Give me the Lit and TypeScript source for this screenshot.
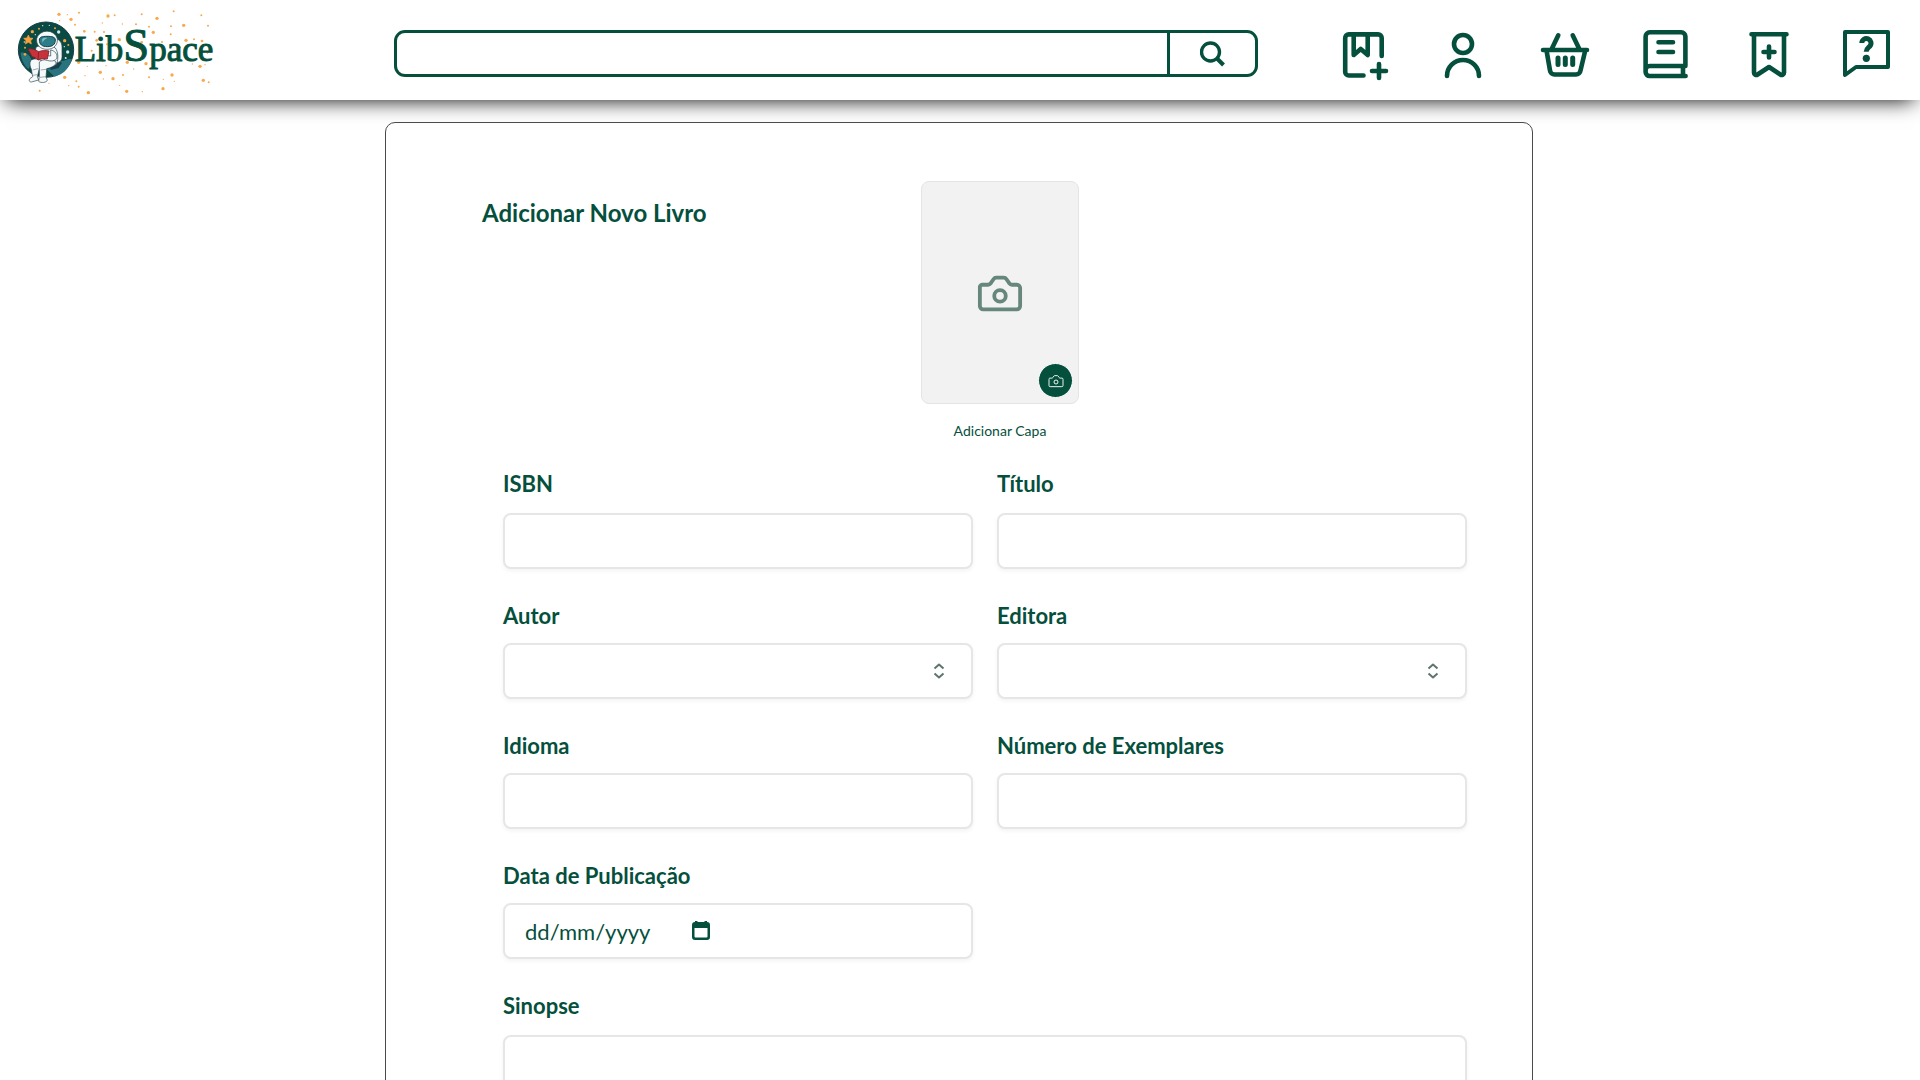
import { LitElement, html, css, svg } from "lit";
import { customElement } from "lit/decorators.js";

type Field = {
  id: string;
  label: string;
  kind: "text" | "select" | "number" | "date";
};

const FIELDS: Field[] = [
  { id: "isbn", label: "ISBN", kind: "text" },
  { id: "titulo", label: "Título", kind: "text" },
  { id: "autor", label: "Autor", kind: "select" },
  { id: "editora", label: "Editora", kind: "select" },
  { id: "idioma", label: "Idioma", kind: "text" },
  { id: "exemplares", label: "Número de Exemplares", kind: "number" },
  { id: "publicacao", label: "Data de Publicação", kind: "date" },
];

const NAV = [
  {
    label: "Adicionar livro",
    art: svg`<path d="M39.700 26V8a3.600 3.600 0 0 0-3.600-3.600H6.800A3.600 3.600 0 0 0 3.200 8v33.900a3.600 3.600 0 0 0 3.600 3.600H21.500"/>
      <path d="M11.700 5v20l7-6 7 6V5"/><path d="M37 34v14M30 41h14"/>`,
  },
  {
    label: "Perfil",
    art: svg`<circle cx="21" cy="14" r="9"/><path d="M5 46a16 16 0 0 1 32 0"/>`,
  },
  {
    label: "Cesta",
    art: svg`<path d="M1 20h44M4.700 21.500 8 40.500a4.500 4.500 0 0 0 4.500 4H34a4.500 4.500 0 0 0 4.500-4L43 21.500M16.300 5.300 9.700 19M30.700 5.300 37.300 19"/>
      <path d="M16 28v6.500M23.300 28v6.500M30.700 28v6.500" stroke-width="5"/>`,
  },
  {
    label: "Empréstimos",
    art: svg`<path d="M43.400 36V6.500a4.200 4.200 0 0 0-4.200-4.200H7.800a4.200 4.200 0 0 0-4.200 4.200V42a4 4 0 0 0 4 4h36M3.600 40a4 4 0 0 1 4-4h35.800M41 36v10"/>
      <path d="M16.500 12.300h14.500M16.500 22h14.500"/>`,
  },
  {
    label: "Lista de desejos",
    art: svg`<path d="M9.500 4.300h35M12 5v37.500a2.300 2.300 0 0 0 3.600 2L27 37l11.400 7.500a2.300 2.300 0 0 0 3.600-2V5"/>
      <path d="M27 16.500v11M21.500 22h11"/>`,
  },
  {
    label: "Ajuda",
    art: svg`<path d="M3 45V2h43v35H14z" stroke-width="4"/>
      <path d="M19.800 13a4.600 4.600 0 1 1 8 3.200c-1.800 1.700-3.600 2.600-3.600 5.500" stroke-width="5" stroke-linecap="butt"/>
      <circle cx="24.300" cy="28.300" r="3.600" fill="currentColor" stroke="none"/>`,
  },
];

/* Star field around the wordmark: x, y, radius. */
const STARS: [number, number, number][] = [
  [177, 43, 5], [202, 44, 2], [237, 38, 3], [213, 58, 5], [179, 62, 2], [225, 74, 3], [324, 48, 5], [344, 46, 3],
  [307, 69, 2], [425, 43, 3], [471, 55, 5], [521, 34, 3], [513, 79, 3], [551, 76, 5], [604, 46, 3], [624, 77, 3],
  [367, 72, 2], [408, 73, 3], [447, 80, 3], [460, 97, 5], [253, 94, 4], [284, 95, 3], [312, 96, 3], [290, 121, 4],
  [358, 119, 5], [392, 122, 5], [431, 112, 3], [425, 127, 4], [512, 103, 3], [558, 121, 5], [582, 118, 3], [606, 123, 4],
  [321, 133, 3], [428, 154, 4], [486, 126, 3], [540, 142, 3], [236, 187, 5], [262, 199, 2], [308, 182, 4], [318, 197, 2],
  [301, 217, 5], [255, 227, 2], [339, 236, 5], [310, 237, 2], [382, 187, 5], [401, 207, 2], [369, 225, 3], [438, 191, 5],
  [380, 274, 5], [359, 256, 2], [427, 275, 2], [447, 232, 3], [489, 266, 5], [490, 238, 2], [516, 225, 5], [523, 244, 2],
  [535, 181, 3], [577, 192, 2], [600, 199, 5], [615, 194, 2], [610, 241, 5], [626, 247, 3], [265, 278, 5], [236, 260, 3],
  [229, 244, 3], [194, 232, 5], [206, 257, 2], [119, 272, 3], [147, 250, 2], [191, 214, 3], [275, 152, 3], [622, 160, 2],
];

@customElement("app-root")
class AppRoot extends LitElement {
  static styles = css`
    :host {
      --green: #054f3d;
      display: block;
      height: 100vh;
      overflow-y: auto;
      scrollbar-width: none;
      background: #fff;
      color: var(--green);
      font-family: Lato, "Noto Sans", sans-serif;
    }
    *, *::before, *::after {
      box-sizing: border-box;
    }
    button, input, select, textarea {
      margin: 0;
      color: inherit;
      font: inherit;
    }
    button {
      padding: 0;
      border: 0;
      background: none;
      cursor: pointer;
    }
    svg {
      display: block;
    }
    .topbar {
      display: grid;
      grid-template-columns: 378fr 864fr 84fr 548fr;
      align-items: center;
      height: 100px;
      padding: 0 30px 0 16px;
      background: #fff;
      box-shadow: 0 6px 20px -6px #000;
    }
    .logo {
      width: 200px;
      color: inherit;
      padding-top: 4px;
    }
    .logo svg {
      width: 200px;
      height: 88px;
    }
    .wordmark {
      font-family: "Liberation Serif", serif;
      font-size: 105px;
      stroke: currentColor;
      stroke-width: 3;
    }
    .wordmark .tall {
      font-size: 140px;
    }
    .search {
      display: flex;
      height: 47px;
      margin-top: 7px;
      border: 3px solid var(--green);
      border-radius: 11px;
    }
    .search input {
      flex: 1;
      min-width: 0;
      padding: 0 14px;
      border: 0;
      border-radius: 8px;
      background: none;
      font-size: 22px;
      outline: none;
    }
    .search button {
      display: grid;
      place-items: center;
      width: 88px;
      border-left: 3px solid var(--green);
    }
    .search svg {
      width: 26px;
      height: 26px;
    }
    .nav {
      display: flex;
      grid-column: 4;
      justify-content: space-between;
      margin-top: 8px;
    }
    .nav a {
      color: inherit;
    }
    .nav svg {
      width: 48px;
      height: 48px;
      overflow: visible;
      fill: none;
      stroke: currentColor;
      stroke-width: 4.6;
      stroke-linecap: round;
      stroke-linejoin: round;
    }
    .main {
      padding: 22px 24px 40px 22px;
    }
    .card {
      max-width: 1148px;
      margin: 0 auto;
      padding: 58px 65px 60px 96px;
      border: 1px solid #4a4a4a;
      border-radius: 10px;
    }
    .intro {
      display: grid;
      grid-template-columns: 439fr 158px 388fr;
      align-items: start;
    }
    h1 {
      margin: 0;
      padding-top: 16px;
      font-size: 24px;
      line-height: 32px;
      font-weight: 700;
    }
    .cover {
      display: grid;
      gap: 17px;
      justify-items: center;
      font-size: 14px;
      line-height: 20px;
    }
    .cover-box {
      position: relative;
      display: grid;
      place-items: center;
      width: 158px;
      height: 223px;
      border: 1px solid #e4e4e4;
      border-radius: 8px;
      background: #f2f2f2;
    }
    .cover-art {
      width: 46px;
      height: 46px;
      color: #67877d;
    }
    .badge {
      position: absolute;
      right: 5px;
      bottom: 5px;
      display: grid;
      place-items: center;
      width: 35px;
      height: 35px;
      border: 1px solid #fff;
      border-radius: 50%;
      background: var(--green);
      color: #fff;
    }
    .badge svg {
      width: 16px;
      height: 16px;
    }
    .fields {
      display: grid;
      grid-template-columns: 1fr 1fr;
      gap: 35px 24px;
      padding: 31px 0 0 21px;
    }
    .field {
      display: flex;
      flex-direction: column;
      gap: 15px;
    }
    .field.roomy {
      gap: 17px;
    }
    .field.wide {
      grid-column: 1 / -1;
    }
    .field label {
      font-size: 22px;
      line-height: 24px;
      font-weight: 700;
    }
    .control {
      display: flex;
      align-items: center;
      height: 56px;
      border: 2px solid #e6e6e6;
      border-radius: 8px;
      background: #fff;
      box-shadow: 0 2px 4px rgba(0, 0, 0, 0.05);
    }
    .control.area {
      height: 160px;
    }
    .control input, .control select, .control textarea {
      grid-area: 1 / 1;
      width: 100%;
      height: 100%;
      padding: 0 20px;
      border: 0;
      border-radius: 6px;
      background: none;
      font-size: 22px;
      outline: none;
      appearance: none;
      resize: none;
    }
    .control.pick {
      display: grid;
      align-items: center;
    }
    .control.pick svg {
      grid-area: 1 / 1;
      justify-self: end;
      width: 12px;
      height: 18px;
      margin-right: 26px;
      pointer-events: none;
      color: #5f756e;
    }
    .control.date {
      gap: 10px;
      padding-left: 20px;
    }
    .control.date input {
      width: 156px;
      padding: 0;
    }
    .control.date svg {
      width: 20px;
      height: 20px;
    }
    input::placeholder {
      color: var(--green);
      opacity: 1;
    }
  `;

  private camera(width: number) {
    return svg`<path d="M3.500 8.200h3.300a1.600 1.600 0 0 0 1.300-.700l1.600-2.300a1.600 1.600 0 0 1 1.300-.700h4a1.600 1.600 0 0 1 1.300.700l1.600 2.300a1.600 1.600 0 0 0 1.300.700h2.600A1.700 1.700 0 0 1 23.500 10v9.300A1.700 1.700 0 0 1 21.800 21H4.200a1.700 1.700 0 0 1-1.700-1.700V10a1.700 1.700 0 0 1 1-1.800z"
      transform="translate(-1 -0.500)" fill="none" stroke="currentColor" stroke-width=${width} stroke-linejoin="round"/>
      <circle cx="12" cy="13.500" r="3" fill="none" stroke="currentColor" stroke-width=${width}/>`;
  }

  private logo() {
    return html`<svg viewBox="48 24 600 264" role="img" aria-label="LibSpace">
      <g fill="#f9a84d">${STARS.map(([x, y, r]) => svg`<circle cx=${x} cy=${y} r=${r}></circle>`)}</g>
      <circle cx="138" cy="149" r="83" fill="#0b4a43" stroke="#173f4a" stroke-width="3"/>
      <path d="M62 158c14-4 30 8 34 26l-10 24c-14-12-22-28-24-50zM140 208c20-2 24-20 44-24 14-3 20-10 32-6-8 26-26 46-52 52z" fill="#2a7480"/>
      <path d="M150 196l22-14 14 6-10 16-24 6z" fill="#173f4a"/>
      <path d="M85 105l4 9 10 1-7 7 2 10-9-5-9 5 2-10-7-7 10-1z" fill="#f9a13c" stroke="#f9a13c" stroke-width="2"/>
      <g fill="#f9a13c"><circle cx="97" cy="95" r="5"/><circle cx="117" cy="86" r="3"/><circle cx="75" cy="143" r="3"/><circle cx="75" cy="163" r="4"/><circle cx="194" cy="122" r="5"/><circle cx="165" cy="85" r="3"/><circle cx="205" cy="135" r="3"/></g>
      <g fill="#cfeaf0"><circle cx="176" cy="96" r="5"/><circle cx="128" cy="77" r="2"/><circle cx="148" cy="76" r="2"/><circle cx="203" cy="156" r="5"/><circle cx="193" cy="140" r="2"/><circle cx="106" cy="104" r="2"/><circle cx="197" cy="174" r="3"/><circle cx="73" cy="126" r="2"/></g>
      <g fill="#f6f9fa" stroke="#24424d" stroke-width="2" stroke-linejoin="round">
        <path d="M162 118c14-4 24 8 24 24v28c0 12-8 18-18 18l-12-30z"/>
        <path d="M108 142c10-8 46-8 58 2 8 10 10 30 4 48-18 14-46 14-64 2 0-18-2-36 2-52z"/>
        <path d="M92 182c6-8 28-6 34 2l-8 22-6 24 4 10-22 6c-8 0-8-8-2-12l6-4-4-22c-4-8-6-18-2-26z"/>
        <path d="M118 186c8-10 42-10 50 0 2 12-20 18-28 20l-2 26 4 8c0 8-20 10-26 4l2-18z"/>
        <path d="M152 150c12 2 22 12 18 26-8 10-24 8-38 2l2-12 18 2z"/>
        <path d="M110 116a32 30 0 0 1 62 0c2 18-10 32-31 32s-33-14-31-32z"/>
      </g>
      <path d="M118 120c0-9 8-11 23-11s25 2 25 11c0 13-8 20-24 20s-24-7-24-20z" fill="#2d7d88" stroke="#173f4a" stroke-width="3"/>
      <path d="M126 118c4-5 12-5 16-4-8 4-12 8-14 14z" fill="#79bcc4"/>
      <path d="M84 147c12-2 22 2 32 8 10-4 20-4 31-2l-5 24c-10-2-18-1-27 3-8-6-12-9-19-10z" fill="#c8323a" stroke="#7a1f2b" stroke-width="2.500" stroke-linejoin="round"/>
      <path d="M116 155l-2 24" stroke="#7a1f2b" stroke-width="2.500"/>
      <path d="M98 210l16-4M98 226l14-2M122 210l16-2M120 232l18-2" stroke="#6d838a" stroke-width="2" fill="none"/>
      <text class="wordmark" x="224" y="183" fill="currentColor">Lib<tspan class="tall">S</tspan>pace</text>
    </svg>`;
  }

  private control(f: Field) {
    if (f.kind === "select") {
      return html`<div class="control pick">
        <select id=${f.id}><option></option></select>
        <svg viewBox="0 0 12 18" fill="none" stroke="currentColor" stroke-width="2" stroke-linejoin="round" aria-hidden="true"><path d="M1.500 6.500 6 2.500l4.500 4M1.500 11.500l4.500 4 4.500-4"/></svg>
      </div>`;
    }
    if (f.kind === "date") {
      return html`<div class="control date">
        <input id=${f.id} type="text" placeholder="dd/mm/yyyy" />
        <button type="button" aria-label="Abrir calendário">
          <svg viewBox="0 0 20 20" aria-hidden="true"><path fill="currentColor" fill-rule="evenodd" d="M4 0h2.500v1h7V0H16v1a3 3 0 0 1 3 3v12a3 3 0 0 1-3 3H4a3 3 0 0 1-3-3V4a3 3 0 0 1 3-3zM3.500 7v8.500a1 1 0 0 0 1 1h11a1 1 0 0 0 1-1V7z"/></svg>
        </button>
      </div>`;
    }
    return html`<div class="control">
      <input id=${f.id} type="text" inputmode=${f.kind === "number" ? "numeric" : "text"} />
    </div>`;
  }

  render() {
    return html`
      <header class="topbar">
        <a class="logo" href="#">${this.logo()}</a>
        <form class="search" role="search">
          <input type="search" aria-label="Pesquisar" />
          <button type="button" aria-label="Pesquisar">
            <svg viewBox="0 0 26 26" fill="none" stroke="currentColor" stroke-width="3.400" aria-hidden="true"><circle cx="10.500" cy="11" r="9"/><path d="M16.500 17l7 7" stroke-width="4"/></svg>
          </button>
        </form>
        <nav class="nav">
          ${NAV.map((n) => html`<a href="#" aria-label=${n.label}><svg viewBox="0 0 48 48" aria-hidden="true">${n.art}</svg></a>`)}
        </nav>
      </header>
      <main class="main">
        <form class="card">
          <div class="intro">
            <h1>Adicionar Novo Livro</h1>
            <div class="cover">
              <div class="cover-box">
                <svg class="cover-art" viewBox="0 0 24 24" aria-hidden="true">${this.camera(2)}</svg>
                <button class="badge" type="button" aria-labelledby="capa">
                  <svg viewBox="0 0 24 24" aria-hidden="true">${this.camera(1.4)}</svg>
                </button>
              </div>
              <span id="capa">Adicionar Capa</span>
            </div>
          </div>
          <div class="fields">
            ${FIELDS.map((f, i) => html`<div class="field ${i < 2 ? "roomy" : ""}">
              <label for=${f.id}>${f.label}</label>
              ${this.control(f)}
            </div>`)}
            <div class="field roomy wide">
              <label for="sinopse">Sinopse</label>
              <div class="control area"><textarea id="sinopse"></textarea></div>
            </div>
          </div>
        </form>
      </main>
    `;
  }
}
